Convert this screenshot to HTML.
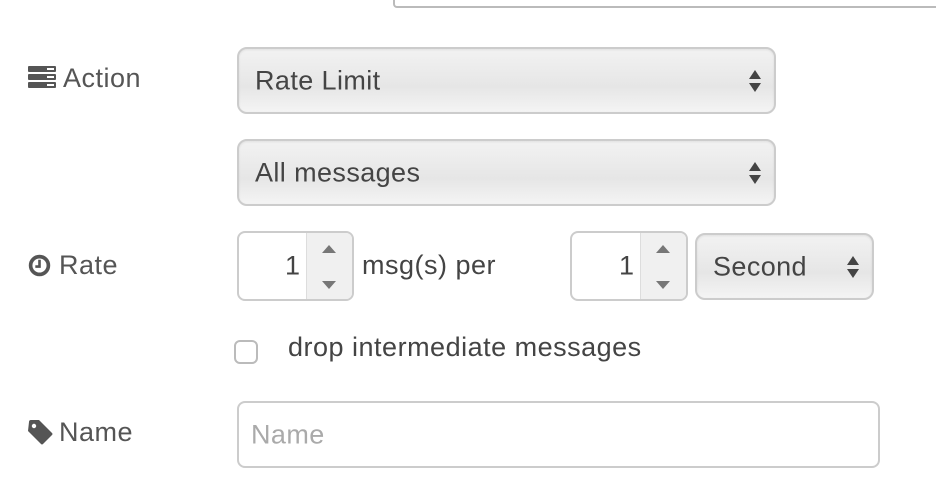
<!DOCTYPE html>
<html><head><meta charset="utf-8"><style>
body{margin:0;width:936px;height:490px;background:#fff;position:relative;overflow:hidden;font-family:"Liberation Sans",sans-serif;color:#555;}
.a{position:absolute;}
.lbl{font-size:27px;letter-spacing:0.5px;color:#555;}
.sel{position:absolute;box-sizing:border-box;border:2px solid #ccc;border-radius:10px;background:linear-gradient(#f2f2f2,#e6e6e6 60%,#f4f4f4);box-shadow:inset 0 1px 2px rgba(0,0,0,.08);font-size:27px;letter-spacing:0.4px;color:#444;}
.sel span{position:absolute;left:16px;top:50%;transform:translateY(-50%);}
.sel svg{position:absolute;right:12px;top:50%;transform:translateY(-50%);}
.spin{position:absolute;box-sizing:border-box;border:2px solid #ccc;border-radius:8px;background:#fff;overflow:hidden;}
.spin .v{position:absolute;font-size:27px;color:#444;top:50%;transform:translateY(-50%);}
.spin .b{position:absolute;right:0;top:0;bottom:0;background:#f0f0f0;border-left:1px solid #ddd;}
</style></head><body>
<div class="a" style="left:393px;top:-10px;width:560px;height:14px;border:2px solid #bbb;border-radius:4px;"></div>

<svg class="a" style="left:28px;top:66px" width="28" height="22" viewBox="0 0 28 22"><rect x="0" y="0" width="28" height="6" rx="1" fill="#555"/><rect x="0" y="8" width="28" height="6" rx="1" fill="#555"/><rect x="0" y="16" width="28" height="6" rx="1" fill="#555"/><rect x="19" y="2" width="7" height="2" fill="#fff"/><rect x="19" y="10" width="7" height="2" fill="#fff"/><rect x="19" y="18" width="7" height="2" fill="#fff"/></svg>
<div class="a lbl" style="left:63px;top:63px">Action</div>

<div class="sel" style="left:237px;top:47px;width:539px;height:67px"><span>Rate Limit</span><svg width="14" height="24" viewBox="0 0 14 24"><path d="M7 1L13 10H1Z M7 23L13 14H1Z" fill="#444"/></svg></div>
<div class="sel" style="left:237px;top:139px;width:539px;height:67px"><span>All messages</span><svg width="14" height="24" viewBox="0 0 14 24"><path d="M7 1L13 10H1Z M7 23L13 14H1Z" fill="#444"/></svg></div>

<svg class="a" style="left:28px;top:254px" width="23" height="23" viewBox="0 0 22 22"><circle cx="11" cy="11" r="8.5" fill="none" stroke="#555" stroke-width="3.5"/><path d="M11 5.5V12H7" fill="none" stroke="#555" stroke-width="2.5"/></svg>
<div class="a lbl" style="left:59px;top:250px">Rate</div>

<div class="spin" style="left:237px;top:231px;width:117px;height:70px"><div class="v" style="right:52px">1</div><div class="b" style="width:45px"><svg class="a" style="left:15px;top:12px" width="14" height="44" viewBox="0 0 14 44"><path d="M7 0L14 8H0Z M7 44L14 36H0Z" fill="#777"/></svg></div></div>
<div class="a lbl" style="left:362px;top:250px;color:#444">msg(s) per</div>
<div class="spin" style="left:570px;top:231px;width:118px;height:70px"><div class="v" style="right:52px">1</div><div class="b" style="width:45px"><svg class="a" style="left:15px;top:12px" width="14" height="44" viewBox="0 0 14 44"><path d="M7 0L14 8H0Z M7 44L14 36H0Z" fill="#777"/></svg></div></div>
<div class="sel" style="left:695px;top:233px;width:179px;height:67px"><span>Second</span><svg width="14" height="24" viewBox="0 0 14 24"><path d="M7 1L13 10H1Z M7 23L13 14H1Z" fill="#444"/></svg></div>

<div class="a" style="left:234px;top:340px;width:24px;height:24px;box-sizing:border-box;border:2px solid #bbb;border-radius:6px;background:#fff"></div>
<div class="a lbl" style="left:288px;top:332px;color:#444">drop intermediate messages</div>

<svg class="a" style="left:28px;top:420px" width="26" height="26" viewBox="0 0 26 26"><path d="M1 2Q1 0 3 0H11L24 13Q25 14 24 15L15 24Q14 25 13 24L0 11Z" fill="#555"/><circle cx="6" cy="6" r="2.2" fill="#fff"/></svg>
<div class="a lbl" style="left:59px;top:417px">Name</div>
<div class="a" style="left:237px;top:401px;width:643px;height:67px;box-sizing:border-box;border:2px solid #ccc;border-radius:8px;background:#fff"><span class="a" style="left:12px;top:50%;transform:translateY(-50%);font-size:27px;letter-spacing:0.4px;color:#aaa">Name</span></div>
</body></html>
